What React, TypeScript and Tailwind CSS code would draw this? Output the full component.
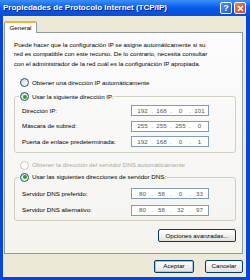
function Radio({ checked = false, disabled = false }: { checked?: boolean; disabled?: boolean }) {
  return (
    <span
      className={
        "flex h-[9px] w-[9px] shrink-0 items-center justify-center rounded-full border " +
        (disabled ? "border-[#CAC8BB] bg-white" : "border-[#1C5180] bg-gradient-to-br from-[#D6D5CC] to-white")
      }
    >
      {checked && <span className="h-[4px] w-[4px] rounded-full bg-[#2BA12B]" />}
    </span>
  );
}

function IpBox({ parts }: { parts: string[] }) {
  return (
    <div className="flex h-[11px] w-[78px] items-center border border-[#7F9DB9] bg-white pl-[3px] text-[#555]">
      {parts.map((p, i) => (
        <div key={i} className="flex items-center">
          {i > 0 && <span className="w-[4px] text-center">.</span>}
          <span className="w-[15px] text-center">{p}</span>
        </div>
      ))}
    </div>
  );
}

function Row({ label, parts, h }: { label: string; parts: string[]; h: string }) {
  return (
    <div className={"flex items-center justify-between pl-[7px] pr-[26px] " + h}>
      <span>{label}</span>
      <IpBox parts={parts} />
    </div>
  );
}

function XpButton({ children, primary = false, w }: { children: React.ReactNode; primary?: boolean; w: string }) {
  return (
    <button
      className={
        "flex h-[13px] items-center justify-center rounded-[2px] border border-[#003C74] bg-gradient-to-b from-white to-[#E3E2DA] " +
        (primary ? "shadow-[inset_0_0_0_1px_#A8C4F0] " : "") +
        w
      }
    >
      {children}
    </button>
  );
}

export default function App() {
  return (
    <div className="flex h-[280px] w-[250px] flex-col overflow-hidden bg-[#0846DB] font-['Liberation_Sans',Arial,sans-serif] text-[6.2px] leading-none text-black">
      {/* Barra de título */}
      <div className="flex h-[16px] shrink-0 items-center justify-between bg-gradient-to-b from-[#3C8EF6] via-[#0659EC] to-[#0A4ED6] pl-[3px] pr-[4px]">
        <span className="text-[8px] font-bold text-white [text-shadow:1px_1px_0_#0A1E8C]">
          Propiedades de Protocolo Internet (TCP/IP)
        </span>
        <div className="flex gap-[2px]">
          <span className="flex h-[12px] w-[12px] items-center justify-center rounded-[2px] border border-white bg-gradient-to-br from-[#4F8CF7] to-[#1F5AE0] text-[9px] font-bold text-white">
            ?
          </span>
          <span className="flex h-[12px] w-[12px] items-center justify-center rounded-[2px] border border-white bg-gradient-to-br from-[#E8805F] to-[#D1401C]">
            <svg width="7" height="7" viewBox="0 0 7 7">
              <path d="M1 1 L6 6 M6 1 L1 6" stroke="white" strokeWidth="1.6" />
            </svg>
          </span>
        </div>
      </div>

      {/* Cuerpo */}
      <div className="ml-[3px] mr-[4px] mb-[3px] flex flex-1 flex-col bg-[#ECE9D8] pl-[1px] pr-[3px]">
        <div className="mt-[5px] flex">
          <div className="relative z-10 -mb-px flex h-[12px] w-[33px] items-center justify-center rounded-t-[2px] border border-b-0 border-[#919B9C] border-t-[2px] border-t-[#F4B33C] bg-[#FCFCFE]">
            General
          </div>
        </div>

        <div className="flex h-[222px] flex-col border border-[#919B9C] bg-gradient-to-b from-[#FCFCFE] to-[#F4F3EE] pl-[9px] pr-[6px] pt-[7px]">
          <p className="leading-[9.3px]">
            Puede hacer que la configuración IP se asigne automáticamente si su
            <br />
            red es compatible con este recurso. De lo contrario, necesita consultar
            <br />
            con el administrador de la red cuál es la configuración IP apropiada.
          </p>

          <div className="mt-[9px] flex h-[12px] items-center gap-[3px] pl-[6px]">
            <Radio />
            <span>Obtener una dirección IP automáticamente</span>
          </div>

          <fieldset className="mt-[2px] rounded-[3px] border border-[#D0D0BF] pb-[3px]">
            <legend className="ml-[4px] flex h-[12px] items-center gap-[3px] px-[1px]">
              <Radio checked />
              <span>Usar la siguiente dirección IP:</span>
            </legend>
            <Row h="h-[15.5px]" label="Dirección IP:" parts={["192", "168", "0", "101"]} />
            <Row h="h-[15.5px]" label="Máscara de subred:" parts={["255", "255", "255", "0"]} />
            <Row h="h-[15.5px]" label="Puerta de enlace predeterminada:" parts={["192", "168", "0", "1"]} />
          </fieldset>

          <div className="mt-[6px] flex h-[12px] items-center gap-[3px] pl-[6px] text-[#ACA899]">
            <Radio disabled />
            <span>Obtener la dirección del servidor DNS automáticamente</span>
          </div>

          <fieldset className="rounded-[3px] border border-[#D0D0BF] pb-[2px] pt-[2px]">
            <legend className="ml-[4px] flex h-[12px] items-center gap-[3px] px-[1px]">
              <Radio checked />
              <span>Usar las siguientes direcciones de servidor DNS:</span>
            </legend>
            <Row h="h-[16.5px]" label="Servidor DNS preferido:" parts={["80", "58", "0", "33"]} />
            <Row h="h-[16.5px]" label="Servidor DNS alternativo:" parts={["80", "58", "32", "97"]} />
          </fieldset>

          <div className="mt-[8px] flex justify-end">
            <XpButton w="w-[78px]">Opciones avanzadas...</XpButton>
          </div>
        </div>

        <div className="mt-[6px] flex justify-end gap-[11px]">
          <XpButton primary w="w-[40px]">Aceptar</XpButton>
          <XpButton w="w-[38px]">Cancelar</XpButton>
        </div>
      </div>
    </div>
  );
}
